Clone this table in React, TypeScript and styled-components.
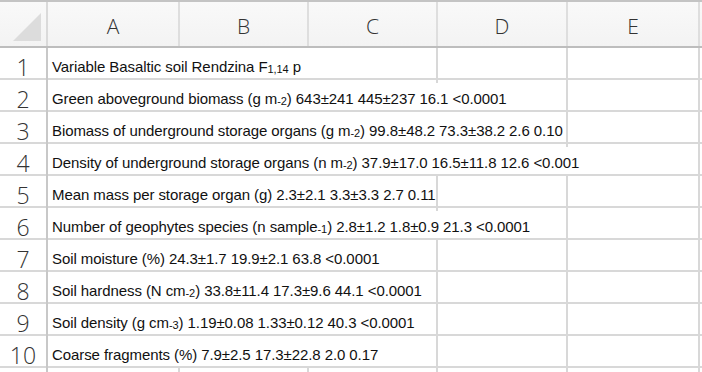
import React from 'react'
import styled, { createGlobalStyle } from 'styled-components'

const GlobalStyle = createGlobalStyle`
  html, body {
    margin: 0;
    padding: 0;
    background: #ffffff;
  }
`

const COLS = '48px 132px 129px 129px 130px 132px'

const Sheet = styled.div`
  width: 702px;
  height: 372px;
  overflow: hidden;
  background: #ffffff;
  border-top: 2px solid #c4c4c4;
  box-sizing: border-box;
`

const HeaderRow = styled.div`
  display: grid;
  grid-template-columns: ${COLS};
  height: 44px;
  background: linear-gradient(#f9f9f9, #f3f3f3);
  border-bottom: 2px solid #bdbdbd;
`

const Corner = styled.div`
  position: relative;
  border-right: 2px solid #dadada;
  &::after {
    content: '';
    position: absolute;
    right: 5px;
    bottom: 5px;
    width: 0;
    height: 0;
    border-left: 28px solid transparent;
    border-bottom: 28px solid #dcdcdc;
  }
`

const ColHead = styled.div`
  display: flex;
  align-items: center;
  justify-content: center;
  border-right: 2px solid #dedede;
  font-family: 'Open Sans', 'DejaVu Sans', sans-serif;
  font-weight: 300;
  font-size: 21px;
  color: #333333;
  padding-top: 4px;
`

const Row = styled.div`
  display: grid;
  grid-template-columns: ${COLS};
  height: 30px;
  border-bottom: 2px solid #d8d8d8;
`

const RowHead = styled.div`
  display: flex;
  align-items: center;
  justify-content: center;
  border-right: 2px solid #c8c8c8;
  font-family: 'Open Sans', 'DejaVu Sans', sans-serif;
  font-weight: 300;
  font-size: 23px;
  color: #333333;
  padding-top: 3px;
`

const Cell = styled.div<{ $span: number }>`
  grid-column: span ${(p) => p.$span};
  display: flex;
  align-items: center;
  padding: 2px 0 0 4px;
  white-space: pre;
  overflow: visible;
  border-right: 2px solid #d8d8d8;
  font-family: 'Liberation Sans', Arial, sans-serif;
  font-size: 15px;
  letter-spacing: -0.08px;
  color: #111111;
`

const Sub = styled.span`
  font-size: 11px;
  vertical-align: -1px;
`

const columns = ['A', 'B', 'C', 'D', 'E']

const rows: { content: React.ReactNode; span: number }[] = [
  { content: <>Variable Basaltic soil Rendzina F<Sub>1,14</Sub>{' p'}</>, span: 3 },
  { content: <>Green aboveground biomass (g m<Sub>-2</Sub>) 643±241 445±237 16.1 &lt;0.0001</>, span: 4 },
  { content: <>Biomass of underground storage organs (g m<Sub>-2</Sub>) 99.8±48.2 73.3±38.2 2.6 0.10</>, span: 4 },
  { content: <>Density of underground storage organs (n m<Sub>-2</Sub>) 37.9±17.0 16.5±11.8 12.6 &lt;0.001</>, span: 5 },
  { content: <>Mean mass per storage organ (g) 2.3±2.1 3.3±3.3 2.7 0.11</>, span: 3 },
  { content: <>Number of geophytes species (n sample<Sub>-1</Sub>) 2.8±1.2 1.8±0.9 21.3 &lt;0.0001</>, span: 4 },
  { content: <>Soil moisture (%) 24.3±1.7 19.9±2.1 63.8 &lt;0.0001</>, span: 3 },
  { content: <>Soil hardness (N cm<Sub>-2</Sub>) 33.8±11.4 17.3±9.6 44.1 &lt;0.0001</>, span: 3 },
  { content: <>Soil density (g cm<Sub>-3</Sub>) 1.19±0.08 1.33±0.12 40.3 &lt;0.0001</>, span: 3 },
  { content: <>Coarse fragments (%) 7.9±2.5 17.3±22.8 2.0 0.17</>, span: 3 },
]

export default function App() {
  return (
    <>
      <GlobalStyle />
      <Sheet>
        <HeaderRow>
          <Corner />
          {columns.map((c) => (
            <ColHead key={c}>{c}</ColHead>
          ))}
        </HeaderRow>
        {rows.map((r, i) => (
          <Row key={i}>
            <RowHead>{i + 1}</RowHead>
            <Cell $span={r.span}>
              <span>{r.content}</span>
            </Cell>
            {Array.from({ length: 5 - r.span }).map((_, j) => (
              <Cell key={j} $span={1} />
            ))}
          </Row>
        ))}
        <Row>
          <RowHead />
          {columns.map((c) => (
            <Cell key={c} $span={1} />
          ))}
        </Row>
      </Sheet>
    </>
  )
}
